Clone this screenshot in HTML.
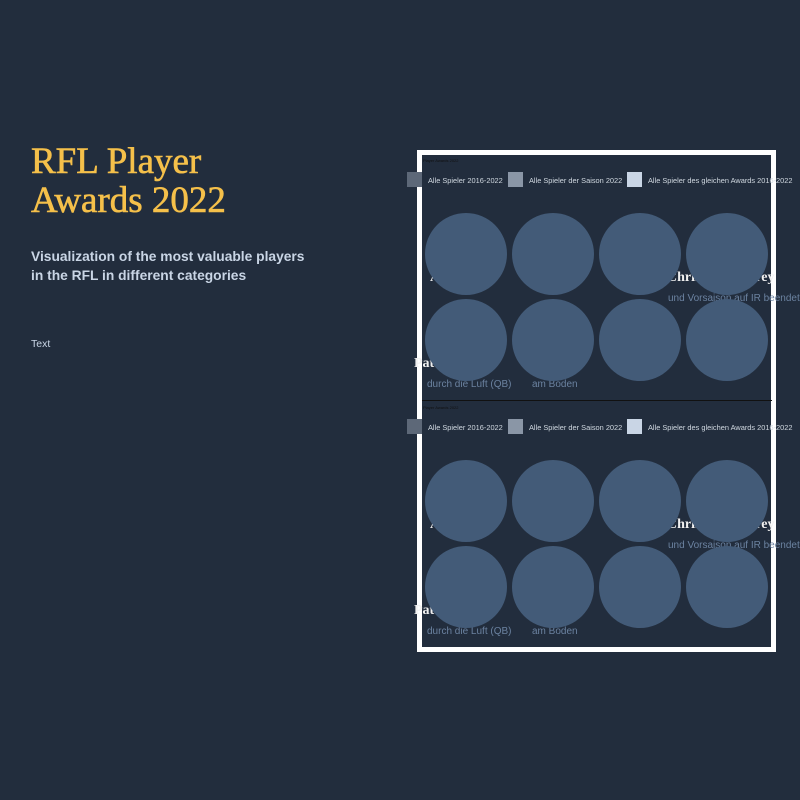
<!DOCTYPE html>
<html><head><style>
body{margin:0;width:800px;height:800px;background:#222d3d;position:relative;overflow:hidden;font-family:"Liberation Sans",sans-serif}
.a{position:absolute;white-space:nowrap}
h1{position:absolute;left:31px;top:142px;margin:0;font-family:"Liberation Serif",serif;font-weight:normal;color:#f5c04a;font-size:37px;line-height:39px;-webkit-text-stroke:0.6px #f5c04a}
.sub{left:31px;top:247px;color:#c9d5e5;font-weight:bold;font-size:13.8px;line-height:19px}
.frame{position:absolute;left:417px;top:150px;width:349px;height:492px;border:5px solid #fff;background:#222d3d}
.c{position:absolute;width:82px;height:82px;border-radius:50%;background:#435b78}
.lg{position:absolute;width:15px;height:15px}
.lt{font-size:7.4px;color:#d0d8e0}
.nm{font-family:"Liberation Serif",serif;font-weight:bold;color:#f0f0f0;font-size:14px}
.ds{color:#6b82a0;font-size:10px}
</style></head><body>
<h1>RFL Player<br>Awards 2022</h1>
<div class="a sub">Visualization of the most valuable players<br>in the RFL in different categories</div>
<div class="a" style="left:31px;top:338px;color:#c9d5e5;font-size:10.5px">Text</div>
<div class="frame"></div>
<div class="a" style="left:422px;top:400px;width:350px;height:1px;background:#111"></div>

<div class="a" style="left:423px;top:158px;font-size:4px;color:#111">Player Awards 2022</div>
<div class="a" style="left:423px;top:405px;font-size:4px;color:#111">Player Awards 2022</div>

<div class="lg" style="left:407px;top:172px;background:#5d6878"></div>
<div class="lg" style="left:508px;top:172px;background:#8a96a6"></div>
<div class="lg" style="left:627px;top:172px;background:#c9d5e5"></div>
<div class="a lt" style="left:428px;top:176px">Alle Spieler 2016-2022</div>
<div class="a lt" style="left:529px;top:176px">Alle Spieler der Saison 2022</div>
<div class="a lt" style="left:648px;top:176px">Alle Spieler des gleichen Awards 2016-2022</div>

<div class="lg" style="left:407px;top:419px;background:#5d6878"></div>
<div class="lg" style="left:508px;top:419px;background:#8a96a6"></div>
<div class="lg" style="left:627px;top:419px;background:#c9d5e5"></div>
<div class="a lt" style="left:428px;top:423px">Alle Spieler 2016-2022</div>
<div class="a lt" style="left:529px;top:423px">Alle Spieler der Saison 2022</div>
<div class="a lt" style="left:648px;top:423px">Alle Spieler des gleichen Awards 2016-2022</div>

<div class="a nm" style="left:430px;top:270px">A&nbsp;&nbsp;&nbsp;&nbsp;&nbsp;&nbsp;&nbsp;&nbsp;&nbsp;s&nbsp; A&nbsp;&nbsp;&nbsp;&nbsp;&nbsp;&nbsp;&nbsp;&nbsp;&nbsp;&nbsp;&nbsp;&nbsp;er Ra</div>
<div class="a nm" style="left:667px;top:270px">Chris&nbsp;&nbsp;&nbsp;&nbsp;&nbsp;&nbsp;&nbsp;&nbsp;&nbsp;&nbsp;&nbsp;affrey</div>
<div class="a ds" style="left:668px;top:293px">und Vorsaison auf IR beendet</div>
<div class="a nm" style="left:414px;top:356px">Pat&nbsp;&nbsp;&nbsp;&nbsp;&nbsp;&nbsp;&nbsp;&nbsp;&nbsp;&nbsp;&nbsp;nes,</div>
<div class="a ds" style="left:427px;top:379px">durch die Luft (QB)</div>
<div class="a ds" style="left:532px;top:379px">am Boden</div>

<div class="a nm" style="left:430px;top:517px">A&nbsp;&nbsp;&nbsp;&nbsp;&nbsp;&nbsp;&nbsp;&nbsp;&nbsp;s&nbsp; A&nbsp;&nbsp;&nbsp;&nbsp;&nbsp;&nbsp;&nbsp;&nbsp;&nbsp;&nbsp;&nbsp;&nbsp;er Ra</div>
<div class="a nm" style="left:667px;top:517px">Chris&nbsp;&nbsp;&nbsp;&nbsp;&nbsp;&nbsp;&nbsp;&nbsp;&nbsp;&nbsp;&nbsp;affrey</div>
<div class="a ds" style="left:668px;top:540px">und Vorsaison auf IR beendet</div>
<div class="a nm" style="left:414px;top:603px">Pat&nbsp;&nbsp;&nbsp;&nbsp;&nbsp;&nbsp;&nbsp;&nbsp;&nbsp;&nbsp;&nbsp;nes,</div>
<div class="a ds" style="left:427px;top:626px">durch die Luft (QB)</div>
<div class="a ds" style="left:532px;top:626px">am Boden</div>

<div class="c" style="left:425px;top:213px"></div><div class="c" style="left:512px;top:213px"></div><div class="c" style="left:599px;top:213px"></div><div class="c" style="left:686px;top:213px"></div>
<div class="c" style="left:425px;top:299px"></div><div class="c" style="left:512px;top:299px"></div><div class="c" style="left:599px;top:299px"></div><div class="c" style="left:686px;top:299px"></div>
<div class="c" style="left:425px;top:460px"></div><div class="c" style="left:512px;top:460px"></div><div class="c" style="left:599px;top:460px"></div><div class="c" style="left:686px;top:460px"></div>
<div class="c" style="left:425px;top:546px"></div><div class="c" style="left:512px;top:546px"></div><div class="c" style="left:599px;top:546px"></div><div class="c" style="left:686px;top:546px"></div>
</body></html>
